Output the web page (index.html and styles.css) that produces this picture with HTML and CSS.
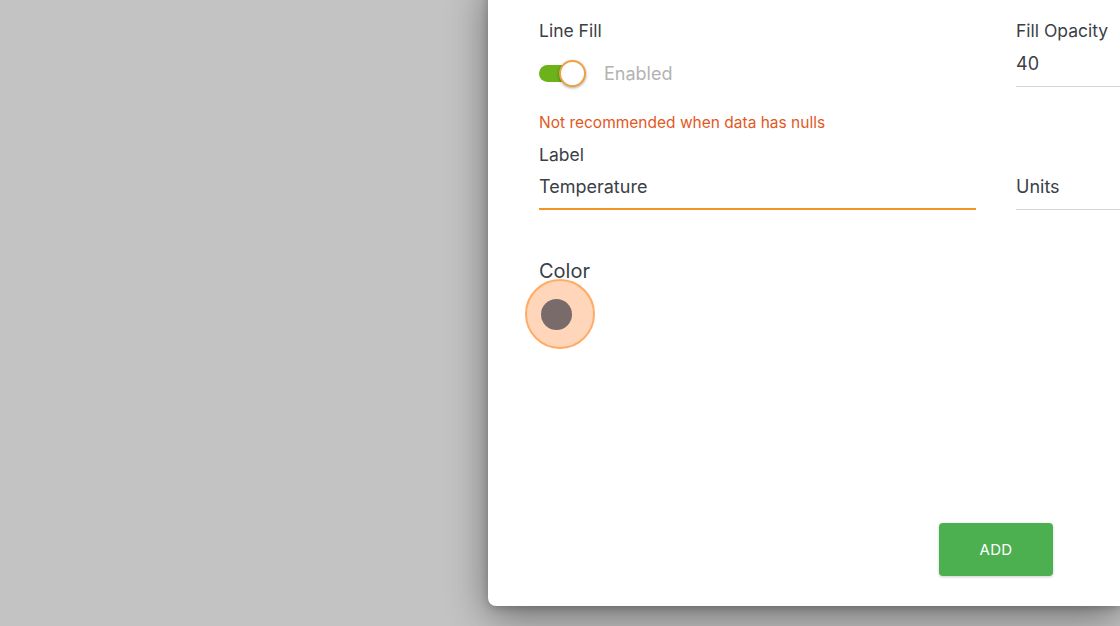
FILE: index.html
```html
<!DOCTYPE html>
<html lang="en">
  <head>
    <meta charset="UTF-8" />
    <meta name="viewport" content="width=device-width, initial-scale=1.0" />
    <title>Add Series</title>
    <link rel="stylesheet" href="styles.css">
  </head>
  <body>
    <div class="dialog">
      <div class="form">
        <div class="row">
          <div class="field main">
            <div class="label">Line Fill</div>
            <label class="switch">
              <span class="track"><span class="knob"></span></span>
              <span class="switch-text">Enabled</span>
            </label>
            <div class="warning">Not recommended when data has nulls</div>
          </div>
          <div class="field side">
            <div class="label">Fill Opacity</div>
            <div class="input">40</div>
          </div>
        </div>

        <div class="row">
          <div class="field main">
            <div class="label">Label</div>
            <div class="input focused">Temperature</div>
          </div>
          <div class="field side bottom">
            <div class="input placeholder">Units</div>
          </div>
        </div>

        <div class="color-field">
          <div class="color-title">Color</div>
          <div class="swatch-ring"><span class="swatch"></span></div>
        </div>
      </div>

      <div class="actions">
        <button class="add-btn">ADD</button>
      </div>
    </div>
  </body>
</html>
```

FILE: styles.css
```css
:root {
  --text-color: #3b4047;
  --muted-color: #b3b3b3;
  --accent-color: #f39423;
  --warn-color: #e2581f;
  --green-color: #4caf50;
}

body {
  font-family: "Inter", "Liberation Sans", sans-serif;
  margin: 0;
  height: 626px;
  overflow: hidden;
  background-color: #c3c3c3;
  color: var(--text-color);
}

/* Dialog panel */
.dialog {
  position: absolute;
  left: 488px;
  top: -20px;
  width: 632px;
  height: 626px;
  overflow: hidden;
  display: flex;
  flex-direction: column;
  background-color: #ffffff;
  border-radius: 0 0 0 8px;
  box-shadow: 0 10px 40px rgba(0, 0, 0, 0.45), 0 2px 8px rgba(0, 0, 0, 0.2);
  box-sizing: border-box;
  padding: 40px 0 30px 51px;
}

.row {
  display: flex;
  gap: 40px;
}

.field {
  flex-shrink: 0;
}

.field.main {
  width: 437px;
}

.field.side {
  width: 200px;
}

.field.bottom {
  display: flex;
  flex-direction: column;
  justify-content: flex-end;
}

.label {
  font-size: 17.5px;
  line-height: 22px;
}

.switch {
  display: flex;
  align-items: center;
  gap: 19px;
  margin-top: 17px;
  height: 28px;
}

.track {
  position: relative;
  display: block;
  width: 46px;
  height: 17px;
  border-radius: 9px;
  background-color: #6cb21a;
}

.knob {
  position: absolute;
  right: -1px;
  top: -5px;
  width: 23px;
  height: 23px;
  border-radius: 50%;
  background-color: #ffffff;
  border: 2px solid #efa043;
  box-shadow: 0 1px 3px rgba(0, 0, 0, 0.35);
}

.switch-text {
  font-size: 18px;
  color: var(--muted-color);
}

.warning {
  font-size: 15.5px;
  color: var(--warn-color);
  margin-top: 26px;
  line-height: 20px;
}

.input {
  font-size: 18px;
  line-height: 24px;
  padding: 10px 0;
  border-bottom: 1px solid #d6d6d6;
}

.input.focused {
  border-bottom: 2px solid var(--accent-color);
  padding-top: 9px;
  padding-bottom: 9px;
}

.row + .row .label {
  margin-top: 11px;
}

.input.placeholder {
  padding-bottom: 10px;
}

.color-field {
  margin-top: 48px;
}

.color-title {
  font-size: 20px;
  line-height: 26px;
}

.swatch-ring {
  display: flex;
  align-items: center;
  justify-content: center;
  width: 66px;
  height: 66px;
  margin: -5px 0 0 -14px;
  border-radius: 50%;
  background-color: #ffd6b9;
  border: 2px solid #ffab66;
}

.swatch {
  display: block;
  width: 31px;
  height: 31px;
  margin-left: -7px;
  border-radius: 50%;
  background-color: #7a6b6b;
}

.actions {
  display: flex;
  margin-top: auto;
  padding-left: 400px;
}

.add-btn {
  width: 114px;
  height: 53px;
  border: none;
  border-radius: 4px;
  background-color: var(--green-color);
  color: #ffffff;
  font-family: "Inter", "Liberation Sans", sans-serif;
  font-size: 15px;
  letter-spacing: 0.3px;
  box-shadow: 0 1px 3px rgba(0, 0, 0, 0.2);
}
```
